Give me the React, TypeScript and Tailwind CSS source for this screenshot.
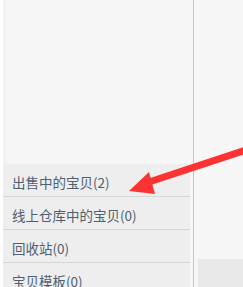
import React from 'react'

const items = ['出售中的宝贝(2)', '线上仓库中的宝贝(0)', '回收站(0)', '宝贝模板(0)']

const App: React.FC = () => {
	return (
		<div className="relative w-[243px] h-[287px] overflow-hidden bg-white flex" style={{ fontFamily: '"Noto Sans CJK SC", "Noto Sans", sans-serif' }}>
			{/* left panel */}
			<div className="ml-[3px] w-[190px] h-full bg-[#f7f7f7] flex flex-col">
				<div className="h-[164px] shrink-0 bg-gradient-to-r from-[#f0f0f0] via-[#f7f7f7] to-[#f7f7f7] [background-size:14px_100%] bg-no-repeat" />
				<div className="w-[187px] flex flex-col">
					{items.map(item => (
						<div key={item} className="h-[33px] bg-[#eeeeee] border-b border-[#d6d6d6] pl-[9px] pt-[8px] text-[13.5px] leading-[20px] text-[#4f5f70]">
							{item}
						</div>
					))}
				</div>
			</div>
			{/* divider */}
			<div className="w-px h-full bg-[#c6c6c6]" />
			{/* right area */}
			<div className="flex-1 h-full bg-[#f7f7f7] pt-[259px] pl-[4px]">
				<div className="w-full h-full bg-[#e8e8e8]" />
			</div>

			{/* red arrow */}
			<svg className="absolute left-0 top-0" width="243" height="287" viewBox="0 0 243 287">
				<line x1="246" y1="150" x2="146" y2="183" stroke="#fc3333" strokeWidth="7" />
				<polygon points="129,191 149,172 155,194" fill="#fc3333" />
			</svg>
		</div>
	)
}

export default App
